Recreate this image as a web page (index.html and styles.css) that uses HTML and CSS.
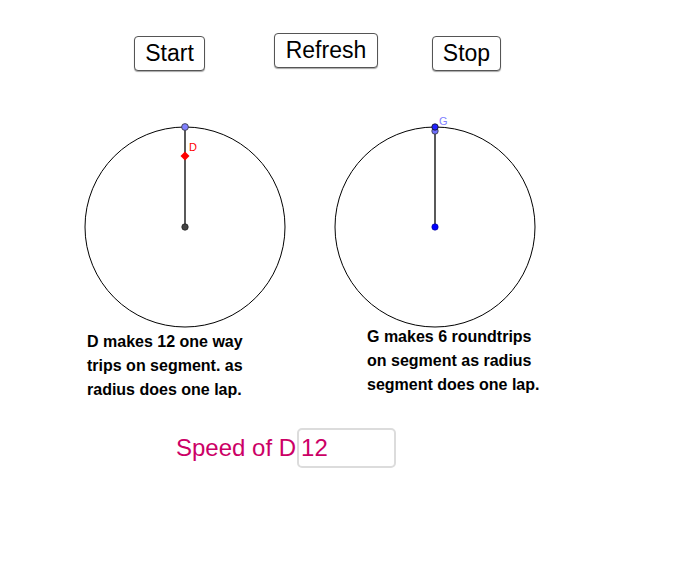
FILE: index.html
```html
<!DOCTYPE html>
<html>
<head>
<meta charset="utf-8">
<link rel="stylesheet" href="styles.css">
</head>
<body>
<div class="stage">
  <svg class="canvas" width="700" height="574" viewBox="0 0 700 574">
    <circle cx="185" cy="227" r="100" fill="none" stroke="#000" stroke-width="1"/>
    <line x1="185" y1="227" x2="185" y2="127" stroke="#000" stroke-width="1.3"/>
    <circle cx="185" cy="227" r="3.2" fill="#444" stroke="#222" stroke-width="0.8"/>
    <circle cx="185" cy="127" r="3.4" fill="#8080ff" stroke="#333" stroke-width="0.8"/>
    <path d="M185 151.5 L189.5 156 L185 160.5 L180.5 156 Z" fill="#ff0000"/>
    <text x="189" y="151" class="lbl-d">D</text>

    <circle cx="435" cy="227" r="100" fill="none" stroke="#000" stroke-width="1"/>
    <line x1="435" y1="227" x2="435" y2="127" stroke="#000" stroke-width="1.3"/>
    <circle cx="435" cy="227" r="3.2" fill="#0000ff" stroke="#00008a" stroke-width="0.6"/>
    <circle cx="435" cy="131" r="3.2" fill="#7070ff" stroke="#333" stroke-width="0.8"/>
    <circle cx="435" cy="127" r="3.2" fill="#2020ff" stroke="#111" stroke-width="0.8"/>
    <text x="439" y="125" class="lbl-g">G</text>
  </svg>

  <button class="btn btn-start">Start</button>
  <button class="btn btn-refresh">Refresh</button>
  <button class="btn btn-stop">Stop</button>

  <p class="note note-d">D makes 12 one way<br>trips on segment. as<br>radius does one lap.</p>
  <p class="note note-g">G makes 6 roundtrips<br>on segment as radius<br>segment does one lap.</p>

  <div class="speed">
    <span class="speed-label">Speed of D</span>
    <div class="speed-input">12</div>
  </div>
</div>
</body>
</html>
```
FILE: styles.css
```css
html, body {
  margin: 0;
  padding: 0;
  background: #fff;
}
.stage {
  position: relative;
  width: 700px;
  height: 574px;
  overflow: hidden;
  background: #fff;
  font-family: "Liberation Sans", Arial, sans-serif;
}
.canvas {
  position: absolute;
  left: 0;
  top: 0;
}
.lbl-d {
  font-family: "Liberation Sans", Arial, sans-serif;
  font-size: 11px;
  fill: #ff0000;
}
.lbl-g {
  font-family: "Liberation Sans", Arial, sans-serif;
  font-size: 11px;
  fill: #7f7fff;
}
.btn {
  position: absolute;
  box-sizing: border-box;
  margin: 0;
  padding: 0;
  background: #fff;
  border: 1px solid #555;
  border-radius: 4px;
  box-shadow: 0 1px 1px rgba(0,0,0,0.35);
  font-family: "Liberation Sans", Arial, sans-serif;
  font-size: 23px;
  color: #000;
  line-height: 1;
}
.btn-start { left: 134px; top: 36px; width: 71px; height: 35px; }
.btn-refresh { left: 274px; top: 33px; width: 104px; height: 35px; }
.btn-stop { left: 432px; top: 36px; width: 69px; height: 35px; }
.note {
  position: absolute;
  margin: 0;
  font-size: 16px;
  font-weight: bold;
  line-height: 24px;
  color: #000;
}
.note-d { left: 87px; top: 330px; }
.note-g { left: 367px; top: 325px; }
.speed {
  position: absolute;
  left: 176px;
  top: 428px;
  display: flex;
  align-items: center;
  gap: 1px;
}
.speed-label {
  font-size: 24px;
  color: #cc0066;
}
.speed-input {
  box-sizing: border-box;
  width: 99px;
  height: 40px;
  border: 2px solid #dcdcdc;
  border-radius: 5px;
  padding: 0 0 0 2px;
  font-size: 24px;
  line-height: 36px;
  color: #cc0066;
}
```
